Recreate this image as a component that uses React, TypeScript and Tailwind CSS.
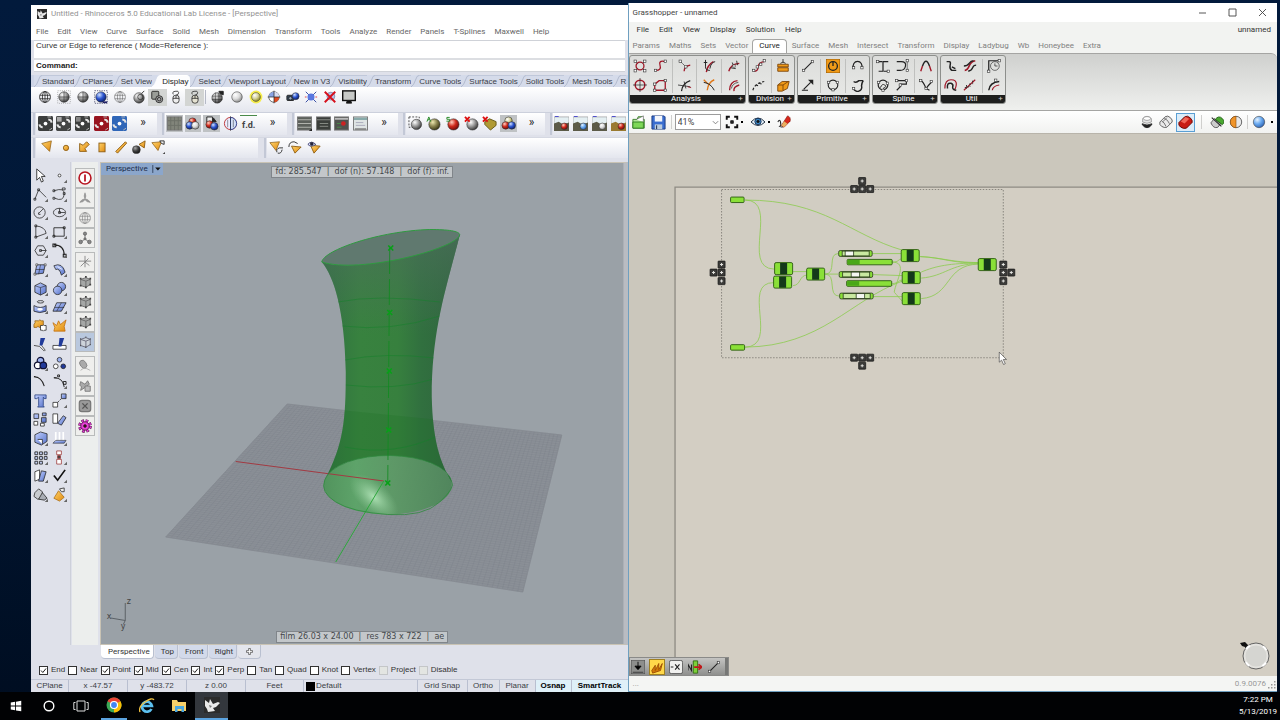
import React from "react";

type Kids = { children?: React.ReactNode };

const k = "#222";

function Ic({ children, className = "size-[14px]" }: Kids & { className?: string }) {
  return (
    <svg viewBox="0 0 16 16" className={className} fill="none" stroke={k} aria-hidden="true">
      {children}
    </svg>
  );
}

function Btn({ label, children, className = "" }: Kids & { label: string; className?: string }) {
  return (
    <button type="button" aria-label={label} className={"grid place-items-center " + className}>
      {children}
    </button>
  );
}

function Ball({ f, x = 8, y = 8, r = 6 }: { f: string; x?: number; y?: number; r?: number }) {
  return <circle cx={x} cy={y} r={r} fill={`url(#${f})`} stroke="#333" strokeWidth=".6" />;
}

function Gradients() {
  const balls: [string, string, string, string][] = [
    ["gray", "#fff", "#9a9a9a", "#333"],
    ["pale", "#fff", "#ddd", "#888"],
    ["blue", "#cfe0ff", "#2c55d0", "#0a1c66"],
    ["sky", "#e4f2ff", "#6aaaf0", "#2e62b0"],
    ["red", "#ffd0c0", "#d02a1c", "#6a0808"],
    ["yellow", "#fff", "#d8d4a0", "#8a8418"],
    ["green", "#d8ffb0", "#58b030", "#1c5a10"],
    ["olive", "#eee8b0", "#8a8450", "#333010"],
    ["dark", "#aaa", "#444", "#111"],
  ];
  return (
    <svg className="absolute size-0" aria-hidden="true">
      <defs>
        {balls.map(([id, a, b, c]) => (
          <radialGradient key={id} id={id} cx=".35" cy=".3" r=".75">
            <stop offset="0" stopColor={a} />
            <stop offset=".5" stopColor={b} />
            <stop offset="1" stopColor={c} />
          </radialGradient>
        ))}
        <linearGradient id="amber" x1="0" y1="0" x2="1" y2="1">
          <stop offset="0" stopColor="#ffd36a" />
          <stop offset="1" stopColor="#e08a10" />
        </linearGradient>
        <linearGradient id="solid" x1="0" y1="0" x2="1" y2="1">
          <stop offset="0" stopColor="#c4d2ff" />
          <stop offset="1" stopColor="#5470c8" />
        </linearGradient>
      </defs>
    </svg>
  );
}

const RhinoLogo = ({ className }: { className: string }) => (
  <svg viewBox="0 0 16 16" className={className} aria-hidden="true">
    <rect width="16" height="16" fill="#2b2b2b" />
    <path d="M1 3l4 3 1-4 3 5 5-2 2 1-4 4-3 1 2 3-7 1-1-3-2-3z" fill="#e9e9e9" />
    <path d="M5 8l3 1-2 2z" fill="#777" />
  </svg>
);

/* ---------- Rhino: icon sets ---------- */

const globeLines = (
  <>
    <circle cx="8" cy="8" r="6.2" />
    <ellipse cx="8" cy="8" rx="3" ry="6.2" />
    <path d="M2 6h12M2 10h12M8 2v12" />
  </>
);

const displayA: [string, React.ReactNode, boolean?][] = [
  ["Wireframe", <g strokeWidth=".9">{globeLines}</g>],
  ["Shade selected", <><rect x=".8" y=".8" width="14.4" height="14.4" strokeDasharray="1 1.4" strokeWidth=".7" stroke="#777" /><Ball f="gray" /><path d="M2 8h12M8 2v12" strokeWidth=".6" /></>],
  ["Shaded", <><Ball f="gray" /><path d="M2 8h12M8 2v12" strokeWidth=".6" /></>],
  ["Rendered", <><rect x=".8" y=".8" width="14.4" height="14.4" strokeDasharray="1.4 1.2" strokeWidth=".9" stroke="#446" /><Ball f="blue" /><path d="M10 14h5" stroke="#226" strokeWidth="2" /></>],
  ["Ghosted", <g strokeWidth=".6" stroke="#555">{globeLines}</g>],
  ["X-Ray", <><Ball f="gray" y={9} /><circle cx="9.5" cy="8" r="3" strokeWidth=".8" /><path d="M11 4l3-3" /></>],
  ["Technical", <><rect x="2" y="1.5" width="8" height="9" rx="1" fill="#9a9d98" /><circle cx="10.5" cy="10.5" r="4" fill="#aaa" /><circle cx="10.5" cy="10.5" r="2" /></>, true],
  ["Artistic", <g strokeWidth=".9"><path d="M5 5q-2-3 2-3.500 4-1 4 1.500T8 6" /><rect x="4.500" y="6" width="7" height="9" rx="3" fill="#eee" /><path d="M4.500 9.500h7M8 6v3.500" /></g>],
  ["Pen", <g strokeWidth=".9"><path d="M5 5q-2-3 2-3.500 4-1 4 1.500T8 6" /><rect x="4.500" y="6" width="7" height="9" rx="3" fill="#e4e1d0" /><path d="M4.500 9.500h7M8 6v3.500" /></g>, true],
];

const displayB: [string, React.ReactNode][] = [
  ["Options", <><Ball f="gray" x={7} y={9} /><g strokeWidth=".6"><path d="M1 7h12M1 11h12M5 3v12M9 3v12" /></g><path d="M9 1.500h5v4l-3-1z" fill="#222" /></>],
  ["Flat shade", <Ball f="pale" />],
  ["Selected only", <><circle cx="8" cy="8" r="7.300" fill="#f5ec4a" stroke="none" /><Ball f="yellow" r={5} /></>],
  ["Backfaces", <><circle cx="8" cy="8" r="6" fill="#fff" strokeWidth=".7" /><path d="M8 2a6 6 0 0 1 6 6H8z" fill="#d8dcf0" stroke="none" /><path d="M2 8a6 6 0 0 1 6-6v6z" fill="#8aa4e4" stroke="none" /><path d="M8 8h6a6 6 0 0 1-6 6z" fill="#e04a20" stroke="none" /><path d="M8 .8v14.400M.8 8h14.400" strokeWidth=".8" /></>],
  ["Camera", <><rect x="1" y="6" width="8" height="6" rx="1" fill="#345" /><Ball f="blue" x={11} y={7} r={4} /><circle cx="5" cy="9.500" r="2" fill="#9ab" /></>],
  ["Flip", <><path d="M2 2l12 12M14 2L2 14" stroke="#223a9a" /><circle cx="8" cy="8" r="4" fill="#5a78e0" stroke="none" /><path d="M1 8h2M13 8h2" stroke="#d33" /></>],
  ["Clear", <><circle cx="9" cy="7" r="4.500" fill="#b8c6ee" stroke="#88a" /><path d="M2 2l12 12M14 2L2 14" stroke="#d6101c" strokeWidth="2.200" /></>],
  ["Full screen", <><rect x=".8" y="1" width="14.400" height="11" fill="#c7c9c7" stroke="#111" strokeWidth="1.600" /><path d="M6 12h4l1 3H5z" fill="#111" /></>],
];

const sketch = (bg: string) => (
  <>
    <rect width="16" height="16" rx="1.500" fill={bg} stroke="none" />
    <circle cx="8" cy="8" r="2" fill="#fff" stroke="none" />
    <path d="M11 4q3-.5 3.500 3M1.500 9q.5 3 3.500 3" stroke="#e4e4e4" strokeWidth="2.200" />
    <path d="M10 1h4M12 15l3-2" stroke="#bbb" />
  </>
);

const panel = (bg: string, fg: React.ReactNode) => (
  <>
    <rect x=".5" y="1" width="15" height="14" fill={bg} stroke="#777" />
    {fg}
  </>
);

type Cell = [string, React.ReactNode, boolean?];

const rowTwo: { w: string; grid: string; cells: Cell[] }[] = [
  {
    w: "w-[121px]",
    grid: "w-[93px] grid-cols-5",
    cells: [
      ["Sketch 1", sketch("#3c3e3d")],
      ["Sketch 2", <>{sketch("#444645")}<rect x="1" y="1" width="5" height="5" fill="#aaa" stroke="none" /></>],
      ["Sketch 3", <>{sketch("#3c3e3d")}<rect x="1" y="1" width="5" height="5" fill="#888" stroke="none" /></>],
      ["Sketch 4", sketch("#981420")],
      ["Sketch 5", sketch("#2f66b8")],
    ],
  },
  {
    w: "w-[122px]",
    grid: "w-[93px] grid-cols-5",
    cells: [
      ["Mesh grid", panel("#81847a", <path d="M4 1v14M8 1v14M12 1v14M1 5h14M1 10h14" stroke="#6d7068" />), true],
      ["Render mesh", <><Ball f="red" x={8} y={6} r={4} /><Ball f="blue" x={5} y={10} r={4} /><Ball f="pale" x={11} y={10} r={4} /></>, true],
      ["Shade mesh", <><path d="M3 1h6v6H3z" fill="#eee" /><Ball f="red" x={6} y={9} r={4} /><Ball f="blue" x={11} y={11} r={4} /><path d="M10 2l3 4h-4z" fill="#222" /></>, true],
      ["Compare", <><circle cx="8" cy="8" r="6.500" fill="#eef" stroke="#b33" /><path d="M8 1.500a6.500 6.500 0 0 1 0 13z" fill="#d4e0f8" stroke="#2a4a9a" /><path d="M5 4v8M11 4v8M8 0v16" strokeWidth=".5" /></>],
    ],
  },
  {
    w: "w-[103px]",
    grid: "w-[75px] grid-cols-4",
    cells: [
      ["Properties", panel("#5c605b", <><path d="M1 4h14M1 8h14M1 12h14" stroke="#b6b9b2" /><path d="M12 17l5-4v4z" fill="#222" /></>)],
      ["Layers", panel("#3b3e3b", <path d="M1 4h14M4 8h9M4 11h9" stroke="#8b8e87" />)],
      ["Render panel", panel("#50524f", <><path d="M1 3h14" stroke="#bbb" strokeWidth="2" /><circle cx="10" cy="8" r="2.500" fill="#c22" stroke="none" /><path d="M3 8h4M3 12h5" stroke="#4a8a4a" /></>)],
      ["Notes", panel("#dfe4e4", <><path d="M1 3h14" stroke="#8aa" strokeWidth="2.500" /><path d="M3 7h8M3 10h10" stroke="#aab" /><path d="M2 14h12" stroke="#888" strokeWidth="2" /></>)],
    ],
  },
  {
    w: "w-[139px]",
    grid: "w-[112px] grid-cols-6",
    cells: [
      ["Select material", <><rect x="1" y="1" width="11" height="11" strokeDasharray="2 1.500" strokeWidth=".8" /><Ball f="gray" x={9} y={9} r={5.500} /></>],
      ["Assign by layer", <><Ball f="olive" x={9} y={9} /><path d="M1 6l2-5 2 5M2 4h2" stroke="#282" /></>],
      ["Assign by object", <><Ball f="red" x={9} y={9} /><path d="M5 1.500H2v2h3v2H1.500" stroke="#282" /></>],
      ["Remove material", <><Ball f="gray" x={9} y={9} /><path d="M1 1l5 5M6 1L1 6" stroke="#d11" strokeWidth="2" /></>],
      ["Remove layer", <><path d="M3 6l5-3 7 3v4l-6 5-6-6z" fill="#b09a34" stroke="#665a1a" /><path d="M1 1l5 5M6 1L1 6" stroke="#d11" strokeWidth="2" /></>],
      ["Materials", <><Ball f="yellow" x={8} y={5} r={4} /><Ball f="red" x={5} y={10} r={4} /><Ball f="blue" x={11.5} y={10} r={4} /></>, true],
    ],
  },
];

const scene = (dot: string, ground = "#5c5b48") => (
  <>
    <rect x="0" y="1" width="16" height="15" fill="#e4eff2" stroke="#888" strokeWidth=".6" />
    <path d="M0 8l5-2 5 3 6-2v9H0z" fill={ground} stroke="none" />
    <path d="M1 .5h4" stroke="#44c" />
    <Ball f={dot} x={11} y={11} r={3.500} />
  </>
);

const sceneSet: [string, React.ReactNode][] = [
  ["Render", scene("red")],
  ["Render preview", scene("sky")],
  ["Render window", scene("pale")],
  ["Render region", scene("red", "#9a7a30")],
];

const amberCone = <path d="M1 3l11-1-4 10z" fill="url(#amber)" stroke="#8a5a10" strokeWidth=".8" />;

const lightSet: [string, React.ReactNode][] = [
  ["Spotlight", <path d="M2 4l11-3-2 12z" fill="url(#amber)" stroke="#8a5a10" strokeWidth=".8" />],
  ["Point light", <circle cx="8" cy="9" r="3" fill="url(#amber)" stroke="#8a5a10" />],
  ["Directional light", <path d="M3 4v9h8l-2-3 5-5-3-3-4 4z" fill="url(#amber)" stroke="#8a5a10" />],
  ["Rectangular light", <rect x="4.500" y="3.500" width="7" height="10" fill="url(#amber)" stroke="#8a5a10" />],
  ["Linear light", <path d="M2 13L13 2l1.500 1.500L4 15z" fill="url(#amber)" stroke="#8a5a10" />],
  ["Edit light", <><Ball f="dark" x={5} y={11} r={4.500} /><path d="M8 5l7-4-1 8z" fill="url(#amber)" stroke="#8a5a10" /></>],
  ["Light options", <>{amberCone}<path d="M10 1h5v4l-3-1z" fill="#eee" /><path d="M12 17l5-4v4z" fill="#444" stroke="none" /></>],
];

const coneSet: [string, React.ReactNode][] = [
  ["Rotate light", <>{amberCone}<path d="M9 14q-1-4 3-5l4 0M10 15q4 1 5-4" /></>],
  ["Orbit light", <><path d="M4 7l11 1-7 7z" fill="url(#amber)" stroke="#8a5a10" /><path d="M1 8q0-6 6-6l4 2" /></>],
  ["Look through light", <><path d="M4 6l11 1-7 8z" fill="url(#amber)" stroke="#8a5a10" /><path d="M1 5q4-5 9 0-5 4-9 0z" fill="#dfe6ff" stroke="#336" /><circle cx="5.500" cy="4.500" r="1.500" fill="#225" /></>],
];

const b = "url(#solid)";
const sideIcons: [string, React.ReactNode, boolean][] = [
  ["Select", <path d="M4 1v12l3-3 2 5 2-1-2-5h4z" fill="#fff" strokeWidth=".9" />, false],
  ["Point", <circle cx="8" cy="8" r="1.500" fill="#fff" strokeWidth=".8" />, true],
  ["Polyline", <path d="M2 13L6 3l8 8M1 12h2v2H1zM5 2h2v2H5z" strokeWidth=".8" />, true],
  ["Curve", <path d="M2 4q12-4 11 4t-10 4M1 3h2v2H1zM12 6h2v2h-2zM1 11h2v2H1zM11 1h3v2h-3z" strokeWidth=".8" />, true],
  ["Circle", <><circle cx="7" cy="8" r="6" /><path d="M6 9l5-5M6 8v2h2" /></>, true],
  ["Ellipse", <><ellipse cx="8" cy="8" rx="6.500" ry="4.500" /><path d="M8 3.500V8h6M7 7h2v2H7z" /></>, true],
  ["Arc", <path d="M3 2q10 1 11 8L3 14V2M2 1h2v2H2zM2 13h2v2H2z" strokeWidth=".8" />, true],
  ["Rectangle", <path d="M2 4h11v9H2zM1 12h2v2H1zM12 3h2v2h-2z" strokeWidth=".9" />, true],
  ["Polygon", <path d="M5 3h6l3 5-3 5H5L2 8zM8 8h6M7 7h2v2H7z" strokeWidth=".8" />, true],
  ["Fillet", <path d="M2 2q11 0 11 11M1 1h3v3H1zM12 12h3v3h-3z" strokeWidth="1.100" />, true],
  ["Surface from points", <><path d="M4 3l9 0-2 9-9 1z" fill={b} /><path d="M3 8h9M8 3l-2 10" strokeWidth=".6" /><path d="M3 2h2v2H3zM12 2h2v2h-2zM1 12h2v2H1z" fill="#fff" strokeWidth=".6" /></>, true],
  ["Surface from curves", <><path d="M2 4q9-4 12 7l-4 3Q8 6 4 8z" fill={b} /><path d="M6 5l5 3" stroke="#fff" /></>, true],
  ["Box", <><path d="M2 5l6-3 6 3v7l-6 3-6-3z" fill={b} /><path d="M2 5l6 2 6-2M8 7v8" strokeWidth=".6" /></>, true],
  ["Boolean", <><circle cx="10" cy="6" r="4.500" fill={b} /><circle cx="6" cy="10" r="4.500" fill={b} /></>, true],
  ["Surface tools", <><path d="M1 7q7 4 13 0v6q-7 3-13 0z" fill={b} /><ellipse cx="7.500" cy="11" rx="3" ry="1.500" fill="#fff" stroke="none" /><ellipse cx="8" cy="3" rx="3.500" ry="1.300" /></>, true],
  ["Mesh", <><path d="M5 4l10 0-5 9-9 0z" fill={b} /><path d="M3 9h10M10 4l-5 9" strokeWidth=".6" /></>, true],
  ["Join", <><path d="M2 3h4q1-2 3 0h2v4q-2 2 0 3H7q-2-2-3 0H1V7q2-2 1-4z" fill="url(#amber)" stroke="#8a5a10" /><path d="M8 8h2q1-1 2 0h2v5h-2q-1 2-2 0H8z" fill="#fff" /></>, false],
  ["Explode", <path d="M1 5l4 3 2-5 2 4 6-5-2 7 1 5H2l1-4z" fill="url(#amber)" stroke="#c06a08" />, false],
  ["Trim", <><path d="M1 9l6 1 5 5 1-1-4-5" fill="#fff" /><path d="M8 1h5l-3 8H7z" fill="#203a9a" stroke="none" /></>, false],
  ["Split", <><path d="M1 9h14v4H1z" fill="#fff" /><path d="M8 1h5l-3 9H7z" fill="#203a9a" stroke="none" /></>, false],
  ["Group", <><circle cx="8" cy="5" r="3.500" fill="#9ab0f0" stroke="#113" strokeWidth="1.300" /><circle cx="5" cy="10" r="3.500" fill="#fff" stroke="#113" strokeWidth="1.300" /><circle cx="11" cy="10" r="3.500" fill="#223a9a" stroke="#113" strokeWidth="1.300" /></>, true],
  ["Ungroup", <><circle cx="8" cy="4" r="2.500" fill="#9ab0f0" /><circle cx="4" cy="11" r="2.500" fill="#fff" /><circle cx="12" cy="11" r="2.500" fill="#223a9a" /></>, false],
  ["Edit points", <path d="M1 3q8 0 11 10M1 3l5 1" strokeWidth="1.100" />, false],
  ["Control points", <path d="M2 4q10 0 11 10M2 4h3M6 1h2v2H6zM12 8h3v3h-3z" strokeWidth="1" />, true],
  ["Text", <path d="M2 2h12v4h-2l-1-1.500v9L12 15H5l1-1.500v-9L4 6H2z" fill={b} stroke="#223a7a" />, false],
  ["Move", <><path d="M10 1h5v5h-5z" fill={b} /><path d="M1 10h5v5H1z" fill="#fff" /><path d="M6 10l4-4" strokeDasharray="2 1" /></>, true],
  ["Copy", <><path d="M1 2h5v5H1zM9 6h5v5H9zM10 1h4v3h-4z" fill={b} /><path d="M1 10h4v4H1zM8 12h4v3H8z" fill="#fff" /></>, false],
  ["Rotate", <><path d="M1 2h5v10H1z" fill="#fff" /><path d="M6 12l6-8 3 2-5 8z" fill={b} /></>, false],
  ["Solid tools", <><path d="M2 4l6-3 7 2v8l-6 4-7-3z" fill={b} /><path d="M5 9h5v5" fill="#fff" /></>, true],
  ["Project", <><path d="M4 1v9M8 1v9M12 1v9" stroke="#fff" strokeWidth="1.800" /><path d="M1 13l3-3h11l-2 3z" fill={b} strokeWidth=".6" /></>, true],
  ["Array", <path d="M2 2h3v3H2zM7 2h3v3H7zM12 2h3v3h-3zM2 7h3v3H2zM7 7h3v3H7zM12 7h3v3h-3zM2 12h3v3H2zM7 12h3v3H7z" fill="#c8d4f8" strokeWidth=".9" />, true],
  ["Align", <><path d="M5 1h5v4H5zM5 10h5v5H5z" fill="#fff" stroke="#933" /><path d="M6 6h3v3H6z" fill="#444" stroke="#933" /></>, true],
  ["Offset", <><path d="M2 4l5-2v10l-5 2z" fill="#fff" /><path d="M9 3l5 1-3 10-5 0z" fill={b} /></>, true],
  ["Check", <path d="M2 8l4 5 8-11" stroke="#111" strokeWidth="1.800" />, true],
  ["Shapes", <><path d="M2 6l4-4 4 3v7l-5 1-4-3z" fill="#c9ccd0" /><path d="M6 13l4-7 5 6-3 2z" fill="#a9adb4" /></>, true],
  ["Render tools", <><path d="M2 12l5-8 6 7-5 4z" fill="url(#amber)" stroke="#a86a10" /><path d="M8 2l5-1v4l-3 0z" fill="#eee" /></>, true],
];

const cubeGray = (
  <>
    <path d="M3 5l6-2 5 2v6l-5 3-6-2z" fill="#a5a7a6" stroke="#666" />
    <path d="M3 5l6 2 5-2M9 7v7" stroke="#666" />
    <path d="M2 4h2M8 2h2M13 4h2M2 12h2M8 14h2M13 11h2" stroke="#444" strokeWidth="2" />
  </>
);

const maxwell: { title: string; on?: boolean; icon: React.ReactNode }[][] = [
  [
    { title: "Power", icon: <><circle cx="8" cy="8" r="6.800" stroke="#b81420" strokeWidth="1.800" fill="#fff" /><path d="M8 4v8" stroke="#b81420" strokeWidth="2" /></> },
    { title: "Fan", icon: <path d="M8 2q2 4 0 7 4 0 6 4-4 0-6-3-2 3-6 3 2-4 6-4-2-3 0-7z" fill="#999" stroke="#888" strokeWidth=".6" /> },
    { title: "Globe", icon: <g stroke="#888" strokeWidth=".8">{globeLines}</g> },
    { title: "Nodes", icon: <><path d="M8 4v5M8 9l-5 4M8 9l5 4" stroke="#666" /><g fill="#888" stroke="#666"><circle cx="8" cy="3" r="1.800" /><circle cx="3" cy="12.500" r="2" /><circle cx="13" cy="12.500" r="2" /><circle cx="8" cy="9" r="1.200" /></g></> },
  ],
  [
    { title: "Axes", icon: <path d="M8 1v13M1 7h14M3 13l9-9M13 12l-5-4" stroke="#777" strokeWidth=".9" /> },
    { title: "Cube A", icon: cubeGray },
    { title: "Cube B", icon: cubeGray },
    { title: "Cube C", icon: cubeGray },
    { title: "Cube D", on: true, icon: <><path d="M3 5l6-2 5 2v6l-5 3-6-2z" fill="#cdd3da" stroke="#667" /><path d="M3 5l6 2 5-2M9 7v7" stroke="#667" /><path d="M2.500 4.500h1M8.500 2.500h1M13.500 4.500h1M2.500 12h1M8.500 14h1M13.500 11h1" stroke="#444" strokeWidth="1.500" /></> },
  ],
  [
    { title: "Hide", icon: <><ellipse cx="6" cy="6" rx="3.500" ry="5" transform="rotate(-35 6 6)" fill="#aaa" stroke="#888" /><path d="M3 13q3-4 7-2t4 2" stroke="#aaa" /></> },
    { title: "Shapes", icon: <><path d="M3 3l5 3 3-4 2 4-4 3-6 4 1-4-2-2z" fill="#aaa" stroke="#777" /><path d="M8 8h6v6H8z" fill="#bbb" stroke="#777" /></> },
    { title: "Close", icon: <><rect x="1.500" y="1.500" width="13" height="13" rx="3" fill="#999" stroke="#777" strokeWidth="1.400" /><path d="M5 5l6 6M11 5l-6 6" stroke="#555" strokeWidth="1.600" /></> },
    { title: "Settings", icon: <><circle cx="8" cy="8" r="6.200" stroke="#5a1050" strokeWidth="3.200" strokeDasharray="3 1.870" /><circle cx="8" cy="8" r="6.200" stroke="#e040d4" strokeWidth="2" strokeDasharray="2 2.870" strokeDashoffset="-.5" /><circle cx="8" cy="8" r="4.800" fill="#e840d8" stroke="#5a1050" /><circle cx="8" cy="8" r="1.500" fill="#501" /></> },
  ],
];

const rhinoMenus = ["File", "Edit", "View", "Curve", "Surface", "Solid", "Mesh", "Dimension", "Transform", "Tools", "Analyze", "Render", "Panels", "T-Splines", "Maxwell", "Help"];
const rhinoTabs = ["Standard", "CPlanes", "Set View", "Display", "Select", "Viewport Layout", "New in V3", "Visibility", "Transform", "Curve Tools", "Surface Tools", "Solid Tools", "Mesh Tools", "R"];

function Grip() {
  return <span className="h-full w-[2px] shrink-0 bg-[#c3c8d6]" />;
}

function More() {
  return <Btn label="More tools" className="flex-1 pb-[2px] text-[12px] leading-none text-[#222]">»</Btn>;
}

const bar = "bg-gradient-to-b from-white to-[#e4e6ee]";

function Toolbars() {
  return (
    <>
      <div role="tablist" className="flex h-[12px] shrink-0 items-stretch overflow-hidden bg-[#cdd4e6] pl-[3px] [font-family:'Liberation_Sans',Arial,sans-serif]">
        {rhinoTabs.map((t) => {
          const on = t === "Display";
          return (
            <div key={t} className="flex shrink-0">
              <svg viewBox="0 0 8 12" className="h-[12px] w-[8px]" fill="none" aria-hidden="true">
                <rect width="8" height="12" fill="#d5dbea" />
                <path d="M0 12Q3 10 4.500 5T8 .5V12z" fill={on ? "#fdfdfe" : "#d5dbea"} />
                <path d="M0 12Q3 10 4.500 5T8 .5" stroke={on ? "#fff" : "#a9b2c8"} strokeWidth=".8" />
              </svg>
              <button
                type="button"
                role="tab"
                aria-selected={on}
                className={"border-t pt-px text-[8px] leading-none whitespace-nowrap " + (on ? "rounded-tr-sm border-white bg-[#fdfdfe] px-[2px] text-[#222]" : "border-[#c0c8da] bg-[#d5dbea] text-[#3a3d46]")}
              >
                {t}
              </button>
            </div>
          );
        })}
      </div>
      <div className={"h-[25px] shrink-0 " + bar}>
        <div className="flex h-[20px] items-center pl-[5px]">
          <div className="grid w-[168px] grid-cols-9">
            {displayA.map(([n, i, on]) => (
              <Btn key={n} label={n} className={on ? "h-[17px] bg-[#d3d5d3]" : "h-[17px]"}><Ic>{i}</Ic></Btn>
            ))}
          </div>
          <span className="ml-px h-[14px] w-px bg-[#b5b9c6]" />
          <div className="ml-[3px] grid w-[149px] grid-cols-8">
            {displayB.map(([n, i]) => (
              <Btn key={n} label={n}><Ic>{i}</Ic></Btn>
            ))}
          </div>
        </div>
      </div>
      <div className="flex h-[23px] shrink-0 gap-[5px] overflow-hidden border-t border-[#ccd0dc] pl-[2px]">
        {rowTwo.map((g, gi) => (
          <div key={gi} className="flex shrink-0 gap-px">
            <Grip />
            <div className={"flex items-center pb-[2px] " + g.w + " " + bar}>
              <div className={"grid h-[17px] " + g.grid}>
                {g.cells.map(([n, i, on]) => (
                  <Btn key={n} label={n} className={on ? "mx-px bg-[#bfc2c4]" : "mx-px"}><Ic className="size-[15px]">{i}</Ic></Btn>
                ))}
                {gi === 1 && <Btn label="Focal distance" className="mx-px border-t border-[#4a8a4a] pt-[3px] text-[9px] leading-none font-bold text-[#444]">f.d.</Btn>}
              </div>
              <More />
            </div>
          </div>
        ))}
        <div className="flex flex-1 gap-px">
          <Grip />
          <div className={"flex min-w-0 flex-1 items-center overflow-hidden pb-[2px] " + bar}>
            {sceneSet.map(([n, i]) => (
              <Btn key={n} label={n} className="mr-[2px] h-[17px] w-[17px] shrink-0"><Ic className="size-[15px]">{i}</Ic></Btn>
            ))}
          </div>
        </div>
      </div>
      <div className="mt-[2px] mb-[4px] flex h-[21px] shrink-0 gap-[6px] border-t border-[#d5d8e2] pl-[2px]">
        <div className="flex gap-px">
          <Grip />
          <div className={"w-[222px] pl-[2px] " + bar}>
            <div className="grid h-[18px] w-[129px] grid-cols-7">
              {lightSet.map(([n, i]) => (
                <Btn key={n} label={n}><Ic>{i}</Ic></Btn>
              ))}
            </div>
          </div>
        </div>
        <div className="flex flex-1 gap-px">
          <Grip />
          <div className={"flex-1 " + bar}>
            <div className="grid h-[18px] w-[56px] grid-cols-3">
              {coneSet.map(([n, i]) => (
                <Btn key={n} label={n}><Ic>{i}</Ic></Btn>
              ))}
            </div>
          </div>
        </div>
      </div>
    </>
  );
}

/* ---------- Rhino: viewport drawing ---------- */

type P = [number, number];
const corners: [P, P, P, P] = [[287.5, 404], [562, 435], [523, 592], [166, 537]];
const mix = (a: P, c: P, t: number): P => [a[0] + (c[0] - a[0]) * t, a[1] + (c[1] - a[1]) * t];
const gridPath = (() => {
  let d = "";
  const n = 70;
  for (let i = 0; i <= n; i++) {
    const t = i / n;
    for (const [s, e] of [
      [mix(corners[0], corners[3], t), mix(corners[1], corners[2], t)],
      [mix(corners[0], corners[1], t), mix(corners[3], corners[2], t)],
    ]) {
      d += `M${s[0].toFixed(1)} ${s[1].toFixed(1)}L${e[0].toFixed(1)} ${e[1].toFixed(1)}`;
    }
  }
  return d;
})();

const bodyPath = "M322 262C334 276 345 310 346 372 346 420 344 444 325 480A64 29 0 0 1 452 482C440 462 433 440 432 397 432 330 446 290 460 235 440 250 360 274 322 262z";

function Scene() {
  return (
    <svg viewBox="101 163 523 481" preserveAspectRatio="xMidYMid slice" className="size-full [grid-area:1/1]" fill="none" aria-label="Perspective view of a lofted green surface" role="img">
      <defs>
        <linearGradient id="loft" x1="0" x2="1">
          <stop offset="0" stopColor="#2f7040" />
          <stop offset=".28" stopColor="#38823f" />
          <stop offset=".55" stopColor="#37803e" />
          <stop offset=".72" stopColor="#31703f" />
          <stop offset="1" stopColor="#2e633d" />
        </linearGradient>
        <linearGradient id="loftTop" x1="0" y1="0" x2="0" y2="1">
          <stop offset="0" stopColor="#4d6f5c" stopOpacity=".7" />
          <stop offset=".4" stopColor="#4d6f5c" stopOpacity="0" />
        </linearGradient>
        <linearGradient id="floor" x1="0" x2="1">
          <stop offset="0" stopColor="#4d9458" />
          <stop offset=".25" stopColor="#5aa566" />
          <stop offset=".55" stopColor="#5a9963" />
          <stop offset="1" stopColor="#4c8558" />
        </linearGradient>
        <radialGradient id="shine">
          <stop offset="0" stopColor="#b6e8bc" stopOpacity=".9" />
          <stop offset="1" stopColor="#8cc795" stopOpacity="0" />
        </radialGradient>
        <clipPath id="body"><path d={bodyPath} /></clipPath>
        <clipPath id="base"><ellipse cx="388" cy="485" rx="64" ry="29.500" /></clipPath>
      </defs>
      <rect x="101" y="163" width="523" height="481" fill="#9aa1a7" />
      <path d="M287.500 404L562 435 523 592 166 537z" fill="#8b9097" />
      <path d={gridPath} stroke="#757a83" strokeWidth=".5" opacity=".4" />
      <path d="M287.500 404L562 435 523 592 166 537z" stroke="#858a91" strokeWidth=".7" />
      <ellipse cx="388" cy="485" rx="64" ry="29.500" fill="url(#floor)" opacity=".92" />
      <g clipPath="url(#base)">
        <ellipse cx="374" cy="497" rx="30" ry="15" transform="rotate(42 374 497)" fill="url(#shine)" />
      </g>
      <path d="M236 461.500L384 481" stroke="#a23a42" />
      <path d="M384 481L336 562" stroke="#2da83c" />
      <path d={bodyPath} fill="url(#loft)" />
      <path d={bodyPath} fill="url(#loftTop)" />
      <g clipPath="url(#body)">
        <path d="M320 408l140 14v70H320z" fill="#1d6e22" opacity=".25" />
        <path d="M338 302q40-8 102 0M342 326q50 6 98-10M345 360q40-8 90-2M346 385q50 6 88-6M345 447q50 10 95-12" stroke="#15802a" strokeWidth=".5" />
      </g>
      <path d="M322 262C324 250 380 231 430 229.500 448 229.500 460 231 460 235 456 249 360 274 322 262z" fill="#60796f" stroke="#2f9a40" />
      <path d="M325 480Q320 492 336 502T388 514.500 440 502 452 482A64 29 0 0 0 325 480" stroke="#2d8a3c" strokeWidth=".8" />
      <path d="M390 248L388 482" stroke="#0f8a1e" strokeWidth=".8" strokeDasharray="26 5" />
      <g stroke="#08a018" strokeWidth="1.600">
        {[[391, 248], [390, 312.5], [389.5, 371], [389, 430], [388, 483]].map(([x, y]) => (
          <path key={y} d={`M${x - 2.5} ${y - 2.5}l5 5m0-5l-5 5M${x - 1.5} ${y}h3`} />
        ))}
      </g>
      <path d="M125.500 603v17.500L111 618M125.500 620.500l-2 4" stroke="#555a60" strokeWidth=".9" />
      <g fill="#444" fontFamily="DejaVu Sans, sans-serif" fontSize="8">
        <text x="127" y="604">z</text>
        <text x="107" y="619">x</text>
        <text x="121" y="629">y</text>
      </g>
    </svg>
  );
}

const hud = "self-center border border-[#80858a] bg-[#c3c7ca] px-[3px] py-px text-[8px] leading-none whitespace-pre text-[#43474b] [font-family:'DejaVu_Sans',sans-serif]";

function Viewport() {
  return (
    <div className="grid min-w-0 flex-1 border-t border-r-4 border-b border-l border-[#c9c3b4] border-r-[#b9bcc2]">
      <Scene />
      <div className="z-10 flex flex-col items-start [grid-area:1/1]">
        <button type="button" className="flex h-[12px] items-center bg-[#8ba6cb] pl-[5px] text-[8px] leading-none text-[#1c2c4a]">
          Perspective
          <svg viewBox="0 0 14 10" className="ml-[4px] h-[10px] w-[11px]" aria-hidden="true">
            <path d="M1 0v10" stroke="#22304a" />
            <path d="M4 3h7L7.500 7z" fill="#111" />
          </svg>
        </button>
        <p className={hud + " -mt-[9px]"}>{"fd: 285.547  |  dof (n): 57.148  |  dof (f): inf."}</p>
        <p className={hud + " mt-auto mb-px"}>{"film 26.03 x 24.00  |  res 783 x 722  |  ae"}</p>
      </div>
    </div>
  );
}

const snaps: [string, number][] = [["End", 1], ["Near", 0], ["Point", 1], ["Mid", 1], ["Cen", 1], ["Int", 1], ["Perp", 1], ["Tan", 0], ["Quad", 0], ["Knot", 0], ["Vertex", 0], ["Project", 2], ["Disable", 2]];

const statusCells: [string, string][] = [
  ["CPlane", "w-[38px]"],
  ["x -47.57", "w-[59px]"],
  ["y -483.72", "w-[59px]"],
  ["z 0.00", "w-[59px]"],
  ["Feet", "w-[58px]"],
];
const toggles: [string, string][] = [
  ["Grid Snap", "w-[50px]"],
  ["Ortho", "w-[32px]"],
  ["Planar", "w-[36px]"],
  ["Osnap", "w-[36px] bg-[#dff0f8] font-bold text-black"],
  ["SmartTrack", "w-[57px] bg-[#dff0f8] font-bold text-black"],
];

function RhinoWindow() {
  return (
    <section aria-label="Rhinoceros" className="mt-[5px] flex min-w-0 flex-[597_1_0%] flex-col overflow-hidden bg-[#dfe1ea]">
      <header className="flex h-[18px] shrink-0 items-center gap-[4px] bg-white pl-[6px] text-[8px] leading-none text-[#929292]">
        <RhinoLogo className="size-[10px]" />
        <h1>Untitled - Rhinoceros 5.0 Educational Lab License - [Perspective]</h1>
      </header>
      <nav className="flex h-[17px] shrink-0 items-center gap-[9px] bg-white pl-[5px] text-[8px] leading-none text-[#666]">
        {rhinoMenus.map((m) => (
          <button key={m} type="button">{m}</button>
        ))}
      </nav>
      <div className="mx-[3px] shrink-0 border-y border-[#cfd2d8] bg-white pl-[2px] text-[8px] [font-family:'Liberation_Sans',Arial,sans-serif]">
        <p className="h-[17px] leading-[9px] text-[#333]">Curve or Edge to reference ( Mode=Reference ):</p>
        <div className="-ml-[2px] flex h-[13px] items-center border-t-2 border-[#dcdee2] pl-[2px]">
          <label htmlFor="command" className="font-bold text-[#222]">Command:</label>
          <input id="command" className="ml-1 h-[9px] min-w-0 flex-1 bg-transparent outline-none" />
        </div>
      </div>
      <div className="h-[3px] shrink-0" />
      <Toolbars />
      <div className="flex min-h-0 flex-1">
        <div className="w-[40px] border-r border-[#cdd0da] pt-[4px]">
          <div className="grid h-[338px] w-[38px] grid-cols-2 grid-rows-[repeat(18,1fr)]">
            {sideIcons.map(([n, i, more]) => (
              <Btn key={n} label={n}>
                <Ic className="size-[15px] [stroke-width:0.8]">
                  {i}
                  {more && <path d="M12 16.500l4.500-4.500v4.500z" fill="#666" stroke="none" />}
                </Ic>
              </Btn>
            ))}
          </div>
        </div>
        <div className="ml-px flex w-[26px] flex-col items-center gap-[4px] bg-[#eceeed] pt-[6px]">
          {maxwell.map((g, gi) => (
            <div key={gi} className="flex flex-col">
              {g.map((c) => (
                <Btn key={c.title} label={c.title} className={"size-[20px] border border-[#b9bbbb] " + (c.on ? "bg-[#b9c8de]" : "bg-[#efefed]")}>
                  <Ic>{c.icon}</Ic>
                </Btn>
              ))}
            </div>
          ))}
        </div>
        <div className="w-[2px]" />
        <Viewport />
      </div>
      <div role="tablist" className="flex h-[16px] shrink-0 items-start gap-px pl-[70px] text-[8px] leading-none text-[#333]">
        {["Perspective", "Top", "Front", "Right", "+"].map((t) => (
          <button
            key={t}
            type="button"
            role="tab"
            aria-selected={t === "Perspective"}
            className={"h-[14px] rounded-b border-r border-b border-[#b9c0d0] pr-[3px] " + (t === "Perspective" ? "bg-white pl-[7px]" : t === "+" ? "bg-[#e3e5ec] pr-[7px] pl-[8px]" : "bg-[#d3daea] pl-[6px]")}
          >
            {t === "+" ? <svg viewBox="0 0 8 8" className="size-[7px]" aria-label="New viewport"><path d="M3 .5h2V3h2.500v2H5v2.500H3V5H.5V3H3z" fill="#fff" stroke="#444" strokeWidth=".8" /></svg> : t}
          </button>
        ))}
      </div>
      <div className="flex h-[18px] shrink-0 items-center gap-[3px] pl-[8px] text-[8px] leading-none text-[#333] [font-family:'Liberation_Sans',Arial,sans-serif]">
        {snaps.map(([n, s]) => (
          <label key={n} className="flex items-center gap-[3px]">
            <span className="grid">
              <input
                type="checkbox"
                defaultChecked={s === 1}
                disabled={s === 2}
                className={"peer size-[9px] appearance-none border [grid-area:1/1] " + (s === 2 ? "border-[#c4c6c8] bg-[#e3e5e2]" : "border-[#333] bg-white")}
              />
              <svg viewBox="0 0 9 9" className="pointer-events-none hidden size-[9px] [grid-area:1/1] peer-checked:block" aria-hidden="true">
                <path d="M2 4.500l1.800 2L7 2.500" stroke="#222" fill="none" />
              </svg>
            </span>
            {n}
          </label>
        ))}
      </div>
      <footer className="flex h-[13px] shrink-0 border-t border-[#c3c8d6] text-[8px] leading-none text-[#3a3d44] [font-family:'Liberation_Sans',Arial,sans-serif]">
        {statusCells.map(([t, w]) => (
          <button key={t} type="button" className={"shrink-0 border-r border-[#b9bfd0] " + w}>{t}</button>
        ))}
        <button type="button" className="flex flex-1 items-center gap-px pl-[2px]">
          <span className="size-[9px] bg-black" />
          Default
        </button>
        {toggles.map(([t, w]) => (
          <button key={t} type="button" className={"shrink-0 border-l border-[#b9bfd0] " + w}>{t}</button>
        ))}
      </footer>
    </section>
  );
}

/* ---------- Grasshopper ---------- */

const r = "#a01828";
const n2 = (x: number, y: number) => <rect x={x - 1.3} y={y - 1.3} width="2.600" height="2.600" fill="#fff" stroke="#333" strokeWidth=".7" />;

const ribbon: { name: string; cols: [string, React.ReactNode][][]; w: string }[] = [
  {
    name: "Analysis",
    w: "w-[117px]",
    cols: [
      [
        ["Control polygon", <><circle cx="8" cy="8" r="4.500" stroke={r} strokeWidth="1.500" /><path d="M3 3l2 2M13 3l-2 2M3 13l2-2M13 13l-2-2" strokeWidth=".7" />{n2(2.5, 2.5)}{n2(13.5, 2.5)}{n2(2.5, 13.5)}{n2(13.5, 13.5)}</>],
        ["Center", <><circle cx="8" cy="8" r="5.500" stroke={r} strokeWidth="1.700" /><path d="M8 0v16M0 8h16" strokeWidth=".8" /></>],
      ],
      [
        ["End points", <><path d="M3 13q7 0 5-6t6-4" stroke={r} strokeWidth="1.500" />{n2(3, 13)}{n2(14, 2.5)}</>],
        ["Planar", <><path d="M2 14V7l5-4h7v11z" stroke={r} strokeWidth="1.500" />{n2(2, 7)}{n2(14, 3)}{n2(14, 14)}{n2(2, 14)}</>],
      ],
      [
        ["Closest point", <><path d="M3 3l5 5" strokeDasharray="2 1" /><path d="M7 14q0-6 7-7" stroke={r} strokeWidth="1.500" />{n2(2.5, 2.5)}{n2(9, 9)}</>],
        ["Evaluate", <><path d="M4 15q1-9 10-12" stroke={k} strokeWidth="1.400" /><path d="M0 8l14 2M7 4l2 8" strokeWidth=".9" /><path d="M11 10l4 1" stroke={r} /></>],
      ],
      [
        ["Curvature", <><path d="M5 15q1-8 8-12" stroke={r} strokeWidth="1.600" /><path d="M2 4h4M4 1v8q0 4 5 4M15 3q-5 1-6 8" strokeWidth="1.100" /></>],
        ["Discontinuity", <><path d="M14 2Q7 5 6 14M2 2l5 5" stroke="#e07818" strokeWidth="1.600" /><path d="M2 5q8 1 12 9" strokeWidth="1.100" /></>],
      ],
      [
        ["Frame", <><path d="M2 14q2-8 12-9" stroke={r} strokeWidth="1.500" /><path d="M6 4l2 5M11 2l1 5M4 10l6 1" />{n2(8, 8)}</>],
        ["Torsion", <><path d="M3 14Q3 4 12 3M8 15q-1-5 6-7" stroke={r} strokeWidth="1.600" /><path d="M5 12q1-6 8-7" strokeWidth=".8" /></>],
      ],
    ],
  },
  {
    name: "Division",
    w: "w-[47px]",
    cols: [
      [
        ["Divide curve", <><path d="M2 14q5 0 5-5t7-6" stroke={r} strokeWidth="1.400" />{n2(2, 13)}{n2(6, 9)}{n2(10, 6)}{n2(14, 2)}</>],
        ["Dash", <path d="M1 14q2-8 13-10M4 8l4 1M8 6l4 1" strokeDasharray="3 2" strokeWidth="1.300" />],
      ],
      [
        ["Contour", <><path d="M2 6h12v3H2zM2 10h12v4H2z" fill="#f09a18" stroke="#7a4408" /><path d="M5 5q3-3 6 0M8 0v4" /></>],
        ["Contour box", <><path d="M2 8l5-4h8l-2 8-6 3H2z" fill="#f09a18" stroke="#7a4408" /><path d="M2 8h6l6-4M8 8v6" stroke="#7a4408" /></>],
      ],
    ],
  },
  {
    name: "Primitive",
    w: "w-[73px]",
    cols: [
      [
        ["Line", <><path d="M3 13L13 3" strokeWidth="1.300" />{n2(3, 13)}{n2(13, 3)}</>],
        ["Line SDL", <><path d="M1 14h7M3 13L11 5" strokeWidth="1.400" /><path d="M14 2v6L8 2z" fill="#222" stroke="none" /></>],
      ],
      [
        ["Circle", <><rect width="16" height="16" fill="#f09a18" stroke="#8a5208" /><circle cx="8" cy="8" r="5" strokeWidth="1.500" /><path d="M8 8V3" strokeWidth="1.500" /></>],
        ["Circle fit", <><circle cx="8" cy="8" r="5.500" strokeWidth="1.300" />{n2(3, 5)}{n2(13, 5)}{n2(8, 13.500)}</>],
      ],
      [
        ["Arc", <><path d="M3 10a5 5 0 1 1 9 0" strokeWidth="1.400" />{n2(3, 10)}{n2(12.500, 10)}</>],
        ["Arc tangent", <><path d="M3 4q3 2 6-1h5M14 3q-2 3-2 6a4 4 0 0 1-9 3" strokeWidth="1.700" />{n2(3, 12)}</>],
      ],
    ],
  },
  {
    name: "Spline",
    w: "w-[66px]",
    cols: [
      [
        ["Bezier", <><path d="M3 14h5V3h6M2 3h5M9 14h5" strokeWidth="1.400" />{n2(2, 3)}{n2(14, 14)}</>],
        ["Interpolate", <><circle cx="8" cy="8" r="5.500" strokeWidth="1.400" /><path d="M5 11q2-5 5-3t-2 4" strokeWidth="1.100" />{n2(3, 5)}{n2(13, 6)}{n2(8, 14)}</>],
      ],
      [
        ["Nurbs curve", <><path d="M2 3h5q6 0 5 5t-6 5H2" strokeWidth="1.400" />{n2(14, 2)}{n2(14, 13)}<path d="M14 3v9" strokeWidth=".6" /></>],
        ["Polyline", <><path d="M2 3h11v4H6v3l-4 4" strokeWidth="1.300" />{n2(13, 3)}{n2(2, 3)}{n2(6, 8)}</>],
      ],
      [
        ["Catenary", <><path d="M2 14q1-3 2-6M14 14q-1-3-2-6" stroke={r} strokeWidth="1.600" /><path d="M4 8Q8-3 12 8" strokeWidth="1.600" /></>],
        ["Swing arc", <><path d="M2 3q3 1 6 9 3-4 7-8M8 12l4 2" strokeWidth="1.300" />{n2(2, 3)}{n2(8, 12)}{n2(14, 4)}</>],
      ],
    ],
  },
  {
    name: "Util",
    w: "w-[66px]",
    cols: [
      [
        ["Explode", <path d="M3 3h3q2 0 1 4t2 6h5M9 9l4 2" strokeWidth="1.700" />],
        ["Offset", <><path d="M1 12Q1 2 8 2t6 6-3 5" stroke={r} strokeWidth="1.400" /><path d="M4 12q-1-7 4-6 3 1 2 4t4 4" strokeWidth="1.700" /></>],
      ],
      [
        ["Flip", <><path d="M2 13Q5 13 7 8T14 2" stroke={r} strokeWidth="2" /><path d="M1 8q4 0 6-3t5-3M6 14q4-1 5-4t4-3" strokeWidth="1.500" /></>],
        ["Join", <><path d="M1 14L14 2" stroke={r} strokeWidth="1.300" /><path d="M4 8v4M8 6v4M11 3v4M2 11l5-1" strokeDasharray="2 1" /></>],
      ],
      [
        ["Fillet", <><path d="M2 14V2h11" strokeWidth="1.400" /><circle cx="9" cy="8" r="5" strokeWidth=".7" /><path d="M9 8h3M9 8V5" strokeWidth=".8" />{n2(14, 2)}{n2(2, 14)}</>],
        ["Offset loose", <><path d="M2 14Q3 5 14 4" strokeWidth="1.700" /><path d="M6 14q1-5 8-6" stroke={r} strokeWidth="1.400" />{n2(10, 2.500)}</>],
      ],
    ],
  },
];

const ghTabs = ["Params", "Maths", "Sets", "Vector", "Curve", "Surface", "Mesh", "Intersect", "Transform", "Display", "Ladybug", "Wb", "Honeybee", "Extra"];

function Ribbon() {
  return (
    <div className="flex h-[58px] shrink-0 items-start gap-[2px] rounded-tr-md border-t border-b border-[#a5a5a3] bg-gradient-to-b from-[#cfd0ce] to-[#eff0ee] pt-px">
      {ribbon.map((g) => (
        <div key={g.name} className={"flex h-[49px] shrink-0 flex-col overflow-hidden rounded-[3px] border border-[#8d8f8c] bg-gradient-to-b from-[#dcdddb] to-[#e9eae8] " + g.w}>
          <div className="flex flex-1 items-center justify-around px-px">
            {g.cols.map((col, ci) => (
              <React.Fragment key={ci}>
                {ci > 0 && !(ci === 1 && g.cols.length !== 2 && g.name !== "Primitive") && <span className="h-[34px] w-px bg-[#bfc0be]" />}
                <div className="grid gap-[3px]">
                  {col.map(([n, i]) => (
                    <Btn key={n} label={n} className="size-[16px]"><Ic>{i}</Ic></Btn>
                  ))}
                </div>
              </React.Fragment>
            ))}
          </div>
          <div className="flex h-[8px] items-center bg-[#1d1e1d] text-[8px] leading-none text-white">
            <span className="flex-1 pl-[6px] text-center">{g.name}</span>
            <button type="button" aria-label={"Expand " + g.name} className="w-[8px] text-[#ccc]">+</button>
          </div>
        </div>
      ))}
    </div>
  );
}

const Dot = ({ label }: { label: string }) => (
  <Btn label={label} className="h-[16px] w-[5px]"><span className="size-[2px] bg-black" /></Btn>
);
const Sep = () => <span className="h-[14px] w-px bg-[#cfcfcd]" />;

function CanvasBar() {
  return (
    <div className="flex h-[23px] shrink-0 items-center justify-between border-b border-[#b8b4aa] bg-gradient-to-b from-white to-[#f1f2f0] pr-[3px] pl-px">
      <div className="flex items-center">
        <Btn label="Open" className="size-[18px]"><Ic><path d="M1 5h5l1-3h5v3h2v10H1z" fill="#b4e89a" stroke="#2f7a20" /><path d="M5 5l8-4v7" fill="#fff" stroke="#555" strokeWidth=".7" /><path d="M1 15V8h12v7z" fill="#7ed858" stroke="#2f7a20" /></Ic></Btn>
        <Btn label="Save" className="ml-[2px] size-[18px]"><Ic className="size-[15px]"><path d="M1 1h13l1 1v13H1z" fill="#3a6ed0" stroke="#1a3a80" /><path d="M4 1h8v6H4z" fill="#f4f6fa" stroke="none" /><path d="M4 10h8v5H4z" fill="#bcd" stroke="none" /><path d="M6 11v4" stroke="#124" /></Ic></Btn>
        <span className="mx-[3px] flex"><Sep /></span>
        <div className="grid">
          <select aria-label="Zoom" defaultValue="41%" className="h-[16px] w-[46px] appearance-none border border-[#9c9c9c] bg-white pl-[2px] text-[9px] leading-none text-[#444] [grid-area:1/1]">
            <option>41%</option>
            <option>100%</option>
          </select>
          <svg viewBox="0 0 8 8" className="pointer-events-none mr-[2px] size-[7px] self-center justify-self-end [grid-area:1/1]" aria-hidden="true"><path d="M1 2.500l3 3 3-3" stroke="#777" fill="none" /></svg>
        </div>
        <Btn label="Zoom extents" className="ml-[3px] size-[16px]"><Ic><path d="M2 5.500V2h3.500M10.500 2H14v3.500M14 10.500V14h-3.500M5.500 14H2v-3.500" stroke="#111" strokeWidth="2.200" /><path d="M6.500 6.500h3v3h-3z" fill="#222" /></Ic></Btn>
        <Dot label="Views" />
        <Btn label="Named views" className="ml-[4px] size-[18px]"><Ic className="size-[16px]"><path d="M1 8q7-8 14 0-7 7-14 0z" fill="#e8f2fa" stroke="#234" strokeWidth="1" /><circle cx="8" cy="7.500" r="3.200" fill="#3a8ac8" stroke="#124" strokeWidth=".8" /><circle cx="8" cy="7.500" r="1.200" fill="#012" /></Ic></Btn>
        <Dot label="Preview options" />
        <Btn label="Sketch" className="ml-[4px] size-[16px]"><Ic><path d="M1 8q2-4 3 0t-1 5q4 2 6-2" strokeWidth="1.200" /><path d="M5 12L12 1q4 1 3 6l-7 7z" fill="#d8281c" stroke="#801008" strokeWidth=".7" /><path d="M5 12l3-5 4 3-4 4z" fill="#e8b060" stroke="none" /></Ic></Btn>
      </div>
      <div className="flex items-center gap-px">
        <Btn label="No preview" className="size-[18px]"><Ic><path d="M3 4q5-5 10 0v4q-5 3-10 0z" fill="#e4e4e4" stroke="#888" strokeWidth=".8" /><ellipse cx="8" cy="4" rx="4" ry="2.200" fill="#fff" stroke="#888" strokeWidth=".8" /><path d="M2.500 10q5.500 3 11 0v1q-5.500 7-11 0z" fill="#222" /></Ic></Btn>
        <Btn label="Wireframe preview" className="size-[18px]"><Ic><path d="M1 8l6-6q3-2 6 1t2 5l-6 6q-3 1-6-1T1 8z" fill="#eaeaea" stroke="#555" /><path d="M3 7q3 1 5 6M6 4q4 1 6 6M9 3l-5 5" stroke="#666" /></Ic></Btn>
        <Btn label="Shaded preview" className="size-[19px] border border-[#5a9fd4] bg-[#dcecf8]"><Ic className="size-[15px]"><path d="M1 8l6-6q3-2 6 1t2 5l-6 6q-3 1-6-1T1 8z" fill="#c81c14" stroke="#6a0a08" /><path d="M3 7l5-5 4 2-5 5z" fill="#f0685a" stroke="none" /></Ic></Btn>
        <span className="mx-[5px] flex"><Sep /></span>
        <Btn label="Selected preview" className="size-[18px]"><Ic><path d="M1 9l4-5 7 6-3 4q-5 2-8-5z" fill="#ccc" stroke="#555" /><path d="M6 5q4-5 8-1t0 7z" fill="#4aa830" stroke="#1c5a10" /><path d="M2 3l11 10" stroke="#222" strokeWidth="1.200" /></Ic></Btn>
        <Btn label="Document preview" className="size-[18px]"><Ic><circle cx="8" cy="8" r="6.500" fill="#e8e8e8" stroke="#555" /><path d="M8 1.500a6.500 6.500 0 0 0 0 13z" fill="#f0952a" stroke="#8a4a08" strokeWidth=".7" /></Ic></Btn>
        <span className="mx-[1px] flex"><Sep /></span>
        <Btn label="Mesh quality" className="size-[18px]"><Ic><Ball f="sky" r={6.500} /></Ic></Btn>
        <Dot label="Quality options" />
      </div>
    </div>
  );
}

const wires = [
  "M745 200C780 200 740 268 774 269",
  "M745 200C825 200 850 235 902 250",
  "M745 347C780 346 740 282 774 282.500",
  "M745 347C822 346 850 300 902 281",
  "M793 271.500H807",
  "M793 285.500C801 285 799 275 807 275",
  "M825 274C837 274 827 253.500 838 253.500",
  "M825 274H838",
  "M825 274C837 274 827 296 839 296",
  "M872 253.500H901",
  "M873 274.500L902 275.500",
  "M873 296.500H902",
  "M892 262C899 262 898 259 901 259",
  "M892 283.500C899 283 898 280 902 280",
  "M892 262C908 262 896 280 894 292T902 301",
  "M920 256.500C945 258 950 262 978 262.500",
  "M920 256.500C940 257 955 264 978 262.500",
  "M921 272C935 266 950 263 978 263",
  "M921 278C945 276 950 264 978 263.500",
  "M921 298.500C952 296 944 265 978 264",
];
const comps: P[] = [[774.5, 262.5], [773.5, 276], [806.5, 268], [901, 249.5], [902, 271.5], [902, 292.5], [978, 258.5]];
const sliders: [number, number, number][] = [[838.5, 250.5, 845], [839, 271.5, 851], [839.5, 293, 856]];
const handles: P[] = [
  [854, 189], [862, 189], [870, 189], [862, 181],
  [854, 357.5], [862, 357.5], [870, 357.5], [862, 365.5],
  [721.5, 264.5], [721.5, 272.5], [721.5, 281], [713.5, 272.5],
  [1003, 264.5], [1003, 272.5], [1003, 281], [1011, 272.5],
];

function GraphCanvas() {
  return (
    <svg viewBox="629 134 648 542" preserveAspectRatio="xMinYMin slice" className="size-full [grid-area:1/1]" fill="none" role="img" aria-label="Component graph">
      <rect x="629" y="134" width="900" height="800" fill="#cbc7bc" />
      <rect x="675" y="187" width="900" height="800" fill="#d3cec3" />
      <path d="M675 934V187H1529" stroke="#8e8b83" strokeWidth="1.300" />
      <rect x="721.500" y="189.500" width="281.500" height="168" fill="#d1cdc2" stroke="#8a877f" strokeDasharray="1.500 1.500" />
      <g stroke="#8ccc4e" strokeWidth=".8">
        {wires.map((d) => <path key={d} d={d} />)}
      </g>
      <g fill="#8ae038" stroke="#2a5a10" strokeWidth=".9">
        <rect x="730.500" y="197" width="13.500" height="5.500" rx="1" />
        <rect x="730.500" y="344.500" width="14" height="5.500" rx="1" />
        {comps.map(([x, y]) => (
          <g key={x + "-" + y}>
            <rect x={x} y={y} width="18" height="12" rx="1.500" />
            <rect x={x + 5.5} y={y + 0.4} width="7" height="11.200" fill="#14391a" stroke="none" />
          </g>
        ))}
        <rect x="847" y="259.300" width="45" height="5.400" rx="1" />
        <rect x="847.500" y="259.800" width="12" height="4.400" fill="#4aa818" stroke="none" />
        <rect x="846.500" y="280.600" width="45" height="5.600" rx="1" />
        <rect x="847" y="281" width="12" height="4.600" fill="#4aa818" stroke="none" />
      </g>
      {sliders.map(([x, y, kx]) => (
        <g key={y} stroke="#2a3a1c" strokeWidth=".8">
          <rect x={x} y={y} width="33.500" height="5.800" rx="1.500" fill="#8ae038" />
          <rect x={x + 3.500} y={y + 0.5} width="27" height="4.800" fill="#c8e8a0" />
          <rect x={kx} y={y + 0.5} width="8.500" height="4.800" fill="#f4f6f2" />
        </g>
      ))}
      {handles.map(([x, y]) => (
        <g key={x + "-" + y}>
          <rect x={x - 3.5} y={y - 3.5} width="7" height="7" rx=".5" fill="#3c3c3a" stroke="#111" strokeWidth=".7" />
          <path d={`M${x - 1.5} ${y}h3M${x} ${y - 1.5}v3`} stroke="#e4e4e0" strokeWidth="1" />
        </g>
      ))}
      <path d="M999 352v10l2.300-2 2 4.300 1.700-.8-2-4.200h3.200z" fill="#fff" stroke="#333" strokeWidth=".6" />
    </svg>
  );
}

const miniTools: [string, React.ReactNode, string][] = [
  ["Minimise", <><rect width="16" height="16" fill="#8d8e8c" stroke="#444" /><path d="M8 2v7M4.500 7L8 11l3.500-4z" fill="#000" stroke="#000" /><path d="M2 14h12" stroke="#333" /></>, ""],
  ["Galapagos", <path d="M2 12l4-6v6l4-8v7l4-7-2 8-9 3z" fill="#d07808" stroke="#9a4a04" />, "bg-[#ffd84a] border border-[#a08020]"],
  ["Expression", <><rect x=".5" y=".5" width="15" height="15" rx="2" fill="#f0f0ee" stroke="#555" /><path d="M2 8h3M7 5l5 6M12 5l-5 6" strokeWidth="1.300" /></>, ""],
  ["Number", <><path d="M0 12V5l4 7V5" strokeWidth="1.200" /><path d="M6 1h5v14H6z" fill="#7cd038" stroke="#2f6a10" /><path d="M7 8h8M12 5l4 3-4 3" stroke="#c01818" strokeWidth="2" /></>, ""],
  ["Line", <><path d="M3 13L13 3" strokeWidth="1.300" />{n2(3, 13)}{n2(13, 3)}</>, ""],
];

function GrasshopperWindow() {
  return (
    <section aria-label="Grasshopper" className="mt-[3px] flex min-w-0 flex-[649_1_0%] flex-col overflow-hidden border-b border-l border-[#6f9fc0] bg-[#f2f3f1]">
      <header className="flex h-[19px] shrink-0 items-center justify-between bg-white pl-[4px] text-[8px] leading-none text-[#444]">
        <h2>Grasshopper - unnamed</h2>
        <div className="flex gap-[10px] pr-[5px]">
          {[["Minimise", "M1 5h7"], ["Maximise", "M1 1h7v7H1z"], ["Close", "M1 1l7 7M8 1L1 8"]].map(([n, d]) => (
            <Btn key={n} label={n} className="w-[20px]"><svg viewBox="0 0 9 9" className="size-[9px]" fill="none" stroke="#444" strokeWidth=".9"><path d={d} /></svg></Btn>
          ))}
        </div>
      </header>
      <nav className="flex h-[16px] shrink-0 items-center gap-[10px] pr-[6px] pl-[8px] text-[8px] leading-none text-[#333]">
        {["File", "Edit", "View", "Display", "Solution", "Help"].map((m) => (
          <button key={m} type="button">{m}</button>
        ))}
        <span className="ml-auto">unnamed</span>
      </nav>
      <div role="tablist" className="flex h-[15px] shrink-0 items-end text-[8px] leading-none text-[#808080]">
        {ghTabs.map((t) => (
          <button
            key={t}
            type="button"
            role="tab"
            aria-selected={t === "Curve"}
            className={t === "Curve" ? "-mb-px h-[15px] rounded-t-[4px] border border-b-0 border-[#a5a5a3] bg-white px-[6px] pb-[3px] text-[#222]" : "h-[14px] pr-[4px] pl-[5px] first:pl-[4px]"}
          >
            {t}
          </button>
        ))}
      </div>
      <Ribbon />
      <CanvasBar />
      <div className="grid min-h-0 flex-1 grid-rows-[minmax(0,1fr)]">
        <GraphCanvas />
        <div className="z-10 flex items-end justify-between [grid-area:1/1]">
          <div className="flex h-[19px] items-center gap-[3px] border border-[#8a8a88] bg-gradient-to-b from-[#c4c4c2] to-[#8f908e]">
            {miniTools.map(([n, i, c]) => (
              <Btn key={n} label={n} className={"size-[16px] " + c}><Ic>{i}</Ic></Btn>
            ))}
            <span className="h-full w-[3px] bg-[#777876]" />
          </div>
          <svg viewBox="0 0 34 34" className="mr-[5px] mb-[3px] size-[34px]" aria-label="Compass" role="img">
            <path d="M2 4l5-1 3 3 5-1-5 5-2 2-1-4-3-1z" fill="#111" />
            <circle cx="18" cy="17" r="13" fill="#e4e3df" stroke="#555" strokeWidth=".9" />
            <circle cx="18" cy="17" r="10.500" fill="#cfcecb" opacity=".7" />
            <circle cx="18" cy="17" r="12" fill="none" stroke="#fff" strokeWidth="2" strokeDasharray="5 13.850" strokeDashoffset="-7" />
          </svg>
        </div>
      </div>
      <footer className="flex h-[15px] shrink-0 items-center justify-between bg-[#f4f5f3] pr-px pl-[4px] text-[8px] leading-none text-[#999]">
        <span>...</span>
        <span className="flex items-center gap-[2px]">
          0.9.0076
          <svg viewBox="0 0 8 8" className="mt-[3px] size-[8px]" fill="#999" aria-hidden="true"><path d="M6 0h1.500v1.500H6zM6 3h1.500v1.500H6zM6 6h1.500v1.500H6zM3 3h1.500v1.500H3zM3 6h1.500v1.500H3zM0 6h1.500v1.500H0z" /></svg>
        </span>
      </footer>
    </section>
  );
}

/* ---------- Taskbar ---------- */

const tasks: [string, React.ReactNode, string][] = [
  ["Start", <path d="M2 4l5-.8v4.300H2zM8 3l6-1v5.500H8zM2 8.500h5v4.300L2 12zM8 8.500h6V14l-6-1z" fill="#fff" stroke="none" />, ""],
  ["Search", <circle cx="8" cy="8" r="5.500" stroke="#fff" strokeWidth="1.600" />, ""],
  ["Task view", <path d="M4 3h8v10H4zM2.500 4.500H.8v7h1.700M13.500 4.500h1.700v7h-1.700" stroke="#ddd" />, ""],
  ["Chrome", <><circle cx="8" cy="8" r="7.500" fill="#3aa757" stroke="none" /><path d="M8 8L1.500 4.250A7.500 7.500 0 0 1 14.500 4.250z" fill="#ea4335" stroke="none" /><path d="M8 8h-.5l7-3.750A7.500 7.500 0 0 1 8 15.500z" fill="#fbbc05" stroke="none" /><circle cx="8" cy="8" r="3.500" fill="#4285f4" stroke="#fff" strokeWidth="1.200" /></>, "border-b-2 border-[#5ba3e0]"],
  ["Internet Explorer", <><path d="M12.500 11A5 5 0 1 1 13 8H4" stroke="#5cc0f0" strokeWidth="2.600" /><path d="M1 14Q-1 9 6 4t9-2" stroke="#f0c040" strokeWidth="1.300" /></>, ""],
  ["File Explorer", <><path d="M1 2h5l1 2h8v9H1z" fill="#f6d06a" stroke="none" /><path d="M4 14V8h9v6h-2.500v-3h-4v3z" fill="#4aa8e0" stroke="none" /></>, ""],
  ["Rhinoceros", null, "border-b-2 border-[#5ba3e0] bg-[#33373d]"],
];

function Taskbar() {
  return (
    <footer className="flex h-[28px] shrink-0 items-stretch justify-between bg-[#010204]">
      <div className="grid w-[228px] grid-cols-7">
        {tasks.map(([n, i, c]) => (
          <Btn key={n} label={n} className={n === "Chrome" ? "mx-[3px] " + c : c}>
            {i ? <Ic className={n === "Start" || n === "Search" ? "size-[14px]" : "size-[16px]"}>{i}</Ic> : <RhinoLogo className="size-[16px]" />}
          </Btn>
        ))}
      </div>
      <time className="flex flex-col items-center justify-center gap-[4px] pr-[3px] text-[8px] leading-none text-white" dateTime="2019-05-13T19:22">
        <span>7:22 PM</span>
        <span>5/13/2019</span>
      </time>
    </footer>
  );
}

export default function App() {
  return (
    <div className="flex h-screen flex-col overflow-hidden bg-gradient-to-b from-[#021a3c] via-[#011735] to-[#000d20] [font-family:Roboto,'Open_Sans',sans-serif]">
      <Gradients />
      <main className="flex min-h-0 flex-1 pr-[3px] pl-[31px]">
        <RhinoWindow />
        <GrasshopperWindow />
      </main>
      <Taskbar />
    </div>
  );
}
